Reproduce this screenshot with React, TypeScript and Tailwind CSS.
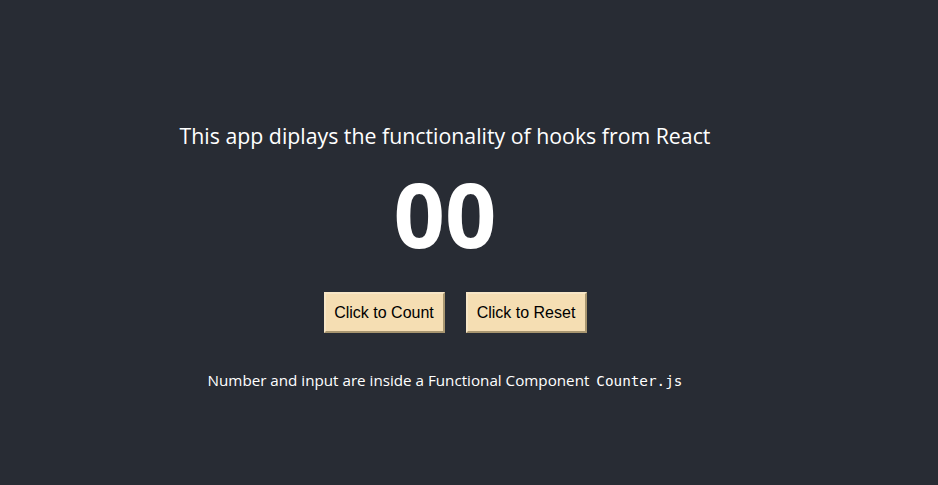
import React from "react";

export default function App() {
  return (
    <div className="w-full h-[485px] bg-[#282c34] text-white flex flex-col items-center justify-center pt-[29px] pr-[48px]" style={{ fontFamily: '"Open Sans", "Noto Sans", sans-serif' }}>
      <div className="flex flex-col items-center">
        <p className="text-[21.3px] leading-[28px]">This app diplays the functionality of hooks from React</p>
        <h1 className="text-[90px] font-bold leading-[110px] mt-[8px] tracking-[0px]">00</h1>
        <div className="flex mt-[24px] pl-[20px]" style={{ fontFamily: '"Liberation Sans", Arial, sans-serif' }}>
          <button className="w-[121px] h-[41px] bg-[#f5deb3] text-black text-[16px] border-2 border-t-[#f7e6c6] border-l-[#f7e6c6] border-r-[#a89670] border-b-[#a89670]">Click to Count</button>
          <button className="ml-[21px] w-[121px] h-[41px] bg-[#f5deb3] text-black text-[16px] border-2 border-t-[#f7e6c6] border-l-[#f7e6c6] border-r-[#a89670] border-b-[#a89670]">Click to Reset</button>
        </div>
        <p className="text-[15.2px] leading-[22px] mt-[36px]">
          Number and input are inside a Functional Component{" "}
          <code className="text-[14.3px] pl-[3px]" style={{ fontFamily: '"DejaVu Sans Mono", monospace' }}>Counter.js</code>
        </p>
      </div>
    </div>
  );
}
